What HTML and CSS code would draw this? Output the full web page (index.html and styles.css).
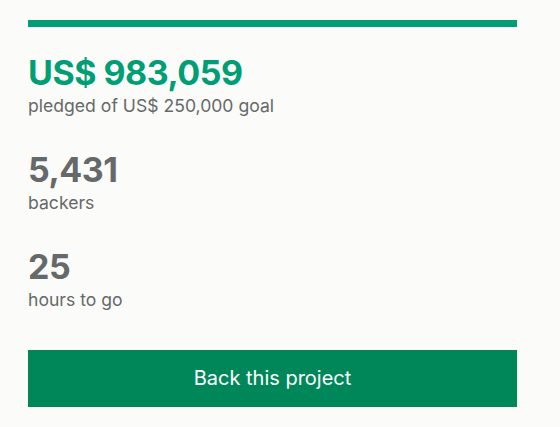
FILE: index.html
```html
<!DOCTYPE html>
<html>
<head>
<meta charset="utf-8">
<link rel="stylesheet" href="styles.css">
</head>
<body>
<div class="card">
  <div class="progress"><div class="progress-fill" style="width:100%"></div></div>
  <div class="stat stat-first">
    <div class="stat-value stat-value-green">US$ 983,059</div>
    <div class="stat-label">pledged of US$ 250,000 goal</div>
  </div>
  <div class="stat">
    <div class="stat-value">5,431</div>
    <div class="stat-label">backers</div>
  </div>
  <div class="stat">
    <div class="stat-value">25</div>
    <div class="stat-label">hours to go</div>
  </div>
  <button class="back-btn">Back this project</button>
</div>
</body>
</html>
```
FILE: styles.css
```css
html, body {
  margin: 0;
  padding: 0;
  background: #fbfbf9;
}
body {
  font-family: Inter, "Noto Sans", sans-serif;
  color: #656969;
}
.card {
  width: 489px;
  padding: 20px 28px;
  display: flex;
  flex-direction: column;
}
.progress {
  height: 7px;
  background: #e2e2e2;
}
.progress-fill {
  height: 100%;
  background: #009e74;
}
.stat {
  display: flex;
  flex-direction: column;
  margin-top: 31px;
}
.stat-first {
  margin-top: 25.6px;
}
.stat-value {
  font-size: 34px;
  font-weight: 700;
  line-height: 40px;
  letter-spacing: -0.5px;
  color: #656969;
}
.stat-value-green {
  color: #009e74;
}
.stat-label {
  font-size: 17.6px;
  line-height: 26px;
}
.back-btn {
  margin-top: 37.4px;
  height: 57px;
  border: none;
  background: #008759;
  color: #ffffff;
  font-family: Inter, "Noto Sans", sans-serif;
  font-size: 20px;
  padding: 0;
}
```
